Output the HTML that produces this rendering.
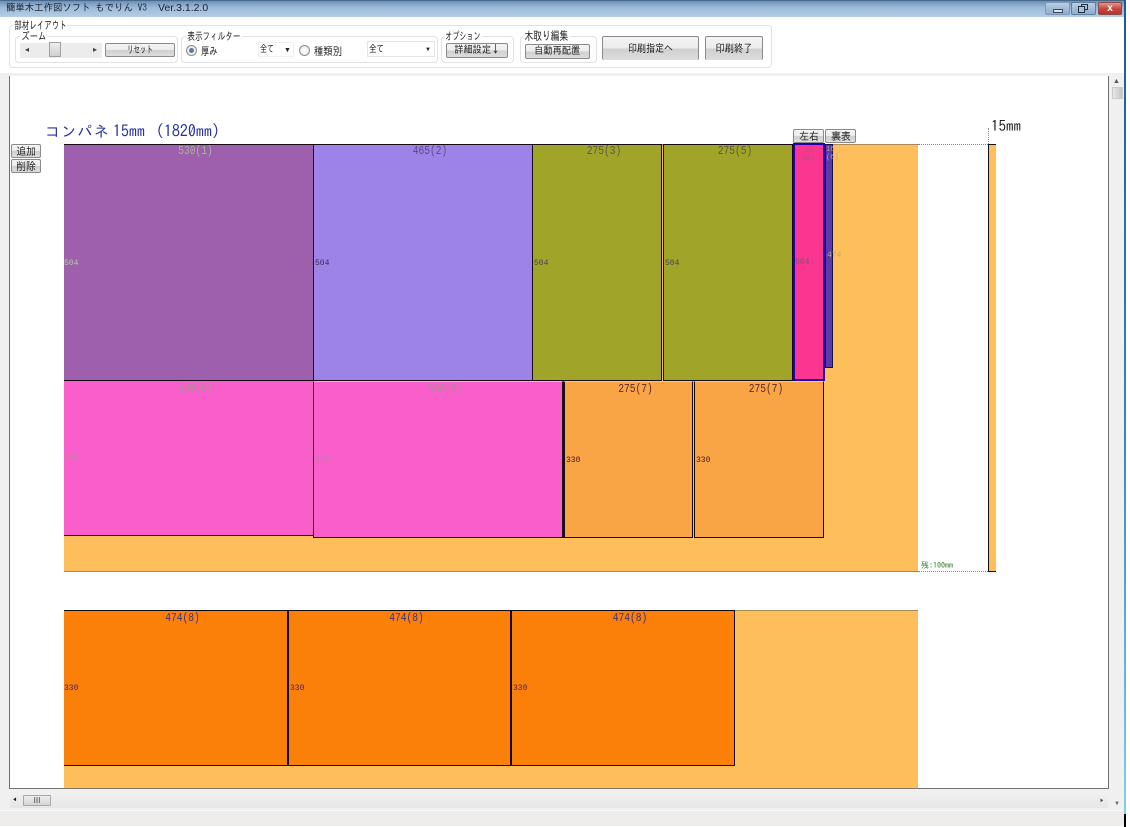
<!DOCTYPE html>
<html lang="ja"><head><meta charset="utf-8"><title>簡単木工作図ソフト もでりん V3</title>
<style>
*{box-sizing:border-box}
html,body{margin:0;padding:0;width:1130px;height:827px;overflow:hidden;background:#fff}
body{position:relative;font-family:"Liberation Sans","IPAGothic","Noto Sans CJK JP",sans-serif;font-size:11px;color:#222}
.a{position:absolute}
.t{position:absolute;white-space:nowrap;line-height:1;transform-origin:left center}
.gb{position:absolute;border:1px solid #dfe3e8;border-radius:4px;background:#fff}
.btn{position:absolute;border:1px solid #8a8a8a;border-radius:2px;background:linear-gradient(#f4f4f4 0,#ececec 48%,#cfcfcf 52%,#dedede 100%);text-align:center;white-space:nowrap;color:#222;font-family:"IPAGothic","Noto Sans CJK JP",sans-serif}
.btn span{display:inline-block;transform-origin:center}
.gt{position:absolute;background:#fff;padding:0 2px;line-height:1;white-space:nowrap;font-family:"IPAGothic","Noto Sans CJK JP",sans-serif;font-size:11px;color:#222;transform-origin:left center}
.p{position:absolute;border:1px solid #140a14;border-top-width:1px}
.c{position:absolute;left:0;right:0;text-align:center;top:0;line-height:12px;font-size:12px;font-family:"Liberation Mono",monospace;letter-spacing:0;transform:translateX(7px) scaleX(.8)}
.s{position:absolute;left:1px;font-size:8px;line-height:8px;font-family:"Liberation Mono",monospace}
.dot{position:absolute;border-color:#888}
.r{position:absolute;width:11px;height:11px;border-radius:50%;border:1px solid #8c8c8c;background:radial-gradient(circle,#fff 0,#e4e4e4 100%)}
</style></head><body>

<!-- title bar -->
<div class="a" style="left:0;top:0;width:1124px;height:17px;background:linear-gradient(#33506f 0,#6f93b8 8%,#9dbbd9 45%,#b5cde5 100%)"></div>
<div class="t" style="left:6px;top:3px;font-size:10px;color:#1c2430;font-family:'IPAGothic','Noto Sans CJK JP',sans-serif;transform:scaleX(.94)">簡単木工作図ソフト もでりん V3</div>
<div class="t" style="left:158px;top:3px;font-size:10.5px;color:#1c2430">Ver.3.1.2.0</div>
<div class="a" style="left:1045px;top:2px;width:25px;height:13px;border:1px solid #7f9ab8;background:linear-gradient(#b7cde3,#8fadcc);border-radius:2px"><div class="a" style="left:7px;top:6px;width:10px;height:4px;border:1px solid #3a4a5c;background:#d8e2ec"></div></div>
<div class="a" style="left:1071px;top:2px;width:25px;height:13px;border:1px solid #5f7f9f;background:linear-gradient(#b7cde3,#8fadcc);border-radius:2px"><div class="a" style="left:9px;top:1px;width:7px;height:6px;border:1px solid #23303e"></div><div class="a" style="left:6px;top:3px;width:7px;height:7px;border:1px solid #23303e;background:#a8c0d8"></div></div>
<div class="a" style="left:1098px;top:2px;width:24px;height:13px;border:1px solid #8a4a48;background:linear-gradient(#e4948a,#c9443a 55%,#b3362e);border-radius:2px"><div class="t" style="left:0;right:0;top:1px;text-align:center;color:#fff;font-size:10px;font-weight:bold">x</div></div>

<!-- window right edge -->
<div class="a" style="left:1124px;top:0;width:2px;height:30px;background:#1d5a9c"></div>
<div class="a" style="left:1124px;top:30px;width:2px;height:784px;background:linear-gradient(#1d5a9c,#2f86c6 50%,#7fd0e8)"></div>
<div class="a" style="left:1124px;top:814px;width:2px;height:13px;background:#000"></div>

<!-- toolbar -->
<div class="gb" style="left:9px;top:25px;width:763px;height:43px"></div>
<div class="gt" style="left:13px;top:20px;transform:scaleX(.68)">部材レイアウト</div>

<div class="gb" style="left:15px;top:36px;width:163px;height:27px"></div>
<div class="gt" style="left:20px;top:31px;transform:scaleX(.75)">ズーム</div>
<div class="a" style="left:20px;top:43px;width:82px;height:15px;background:#ececec"></div>
<div class="t" style="left:25px;top:46px;font-size:8px;color:#444">◂</div>
<div class="t" style="left:93px;top:46px;font-size:8px;color:#444">▸</div>
<div class="a" style="left:49px;top:42px;width:12px;height:15px;border:1px solid #a0a0a0;background:linear-gradient(#eee,#cfcfcf)"></div>
<div class="btn" style="left:105px;top:43px;width:70px;height:14px;font-size:10px;line-height:12px"><span style="transform:scaleX(.65)">リセット</span></div>

<div class="gb" style="left:181px;top:36px;width:257px;height:27px"></div>
<div class="gt" style="left:186px;top:31px;transform:scaleX(.69)">表示フィルター</div>
<div class="r" style="left:186px;top:45px"><div class="a" style="left:2px;top:2px;width:5px;height:5px;border-radius:50%;background:#5c7a9c"></div></div>
<div class="t" style="left:201px;top:46px;font-family:'IPAGothic',sans-serif;font-size:11px;transform:scaleX(.75)">厚み</div>
<div class="a" style="left:258px;top:42px;width:36px;height:15px;border:1px solid #f0f0f0"></div>
<div class="t" style="left:260px;top:44px;font-family:'IPAGothic',sans-serif;font-size:10px;transform:scaleX(.7)">全て</div>
<div class="t" style="left:284px;top:47px;font-size:7px;color:#222">▼</div>
<div class="r" style="left:299px;top:45px"></div>
<div class="t" style="left:314px;top:46px;font-family:'IPAGothic',sans-serif;font-size:11px;transform:scaleX(.85)">種類別</div>
<div class="a" style="left:367px;top:41px;width:68px;height:16px;border:1px solid #e6e6e6"></div>
<div class="t" style="left:369px;top:44px;font-family:'IPAGothic',sans-serif;font-size:10px;transform:scaleX(.75)">全て</div>
<div class="t" style="left:425px;top:47px;font-size:6px;color:#222">▼</div>

<div class="gb" style="left:441px;top:36px;width:73px;height:27px"></div>
<div class="gt" style="left:444px;top:31px;transform:scaleX(.64)">オプション</div>
<div class="btn" style="left:446px;top:43px;width:62px;height:15px;font-size:10.5px;line-height:13px"><span style="transform:scaleX(.87)">詳細設定↓</span></div>

<div class="gb" style="left:520px;top:36px;width:77px;height:27px"></div>
<div class="gt" style="left:523px;top:30px;font-size:12px;transform:scaleX(.73)">木取り編集</div>
<div class="btn" style="left:525px;top:44px;width:65px;height:15px;font-size:10.5px;line-height:13px"><span style="transform:scaleX(.88)">自動再配置</span></div>

<div class="btn" style="left:602px;top:36px;width:97px;height:24px;font-size:11px;line-height:23px;border-bottom:0"><span style="transform:scaleX(.82)">印刷指定へ</span></div>
<div class="btn" style="left:705px;top:36px;width:58px;height:24px;font-size:11px;line-height:23px;border-bottom:0"><span style="transform:scaleX(.84)">印刷終了</span></div>

<!-- separator + surrounding chrome -->
<div class="a" style="left:0;top:73px;width:1124px;height:3px;background:#f0f0f0"></div>
<div class="a" style="left:0;top:76px;width:9px;height:734px;background:#f0f0f0"></div>
<div class="a" style="left:1109px;top:76px;width:15px;height:734px;background:#f0f0f0"></div>
<div class="a" style="left:0;top:789px;width:1124px;height:21px;background:#f0f0f0"></div>

<!-- main client -->
<div class="a" style="left:9px;top:76px;width:1100px;height:713px;background:#fff;border:1px solid #707070;border-top:0"></div>

<!-- vscroll -->
<div class="t" style="left:1113px;top:78px;font-size:7px;color:#555">▲</div>
<div class="a" style="left:1112px;top:87px;width:11px;height:12px;background:linear-gradient(90deg,#e8e8e8,#c4c4c4);border:1px solid #ccc"></div>
<div class="t" style="left:1114px;top:801px;font-size:6px;color:#666">▼</div>

<!-- hscroll -->
<div class="a" style="left:10px;top:793px;width:1098px;height:15px;background:linear-gradient(#f0f0f0,#e6e6e6)"></div>
<div class="t" style="left:13px;top:797px;font-size:7px;color:#222">◀</div>
<div class="a" style="left:23px;top:795px;width:28px;height:11px;border:1px solid #a8a8a8;background:linear-gradient(#eee,#d4d4d4);border-radius:1px;text-align:center;font-size:8px;line-height:9px;color:#444">III</div>
<div class="t" style="left:1100px;top:798px;font-size:7px;color:#555">▶</div>

<!-- status -->
<div class="a" style="left:0;top:810px;width:1124px;height:16px;background:#efedec;border-top:1px solid #f8f8f8"></div>

<!-- heading -->
<div class="t" style="left:45px;top:123px;font-size:15px;color:#2732a0;font-family:'IPAGothic','Noto Sans CJK JP',sans-serif"><span style="letter-spacing:1.2px">コンパネ</span><span style="font-size:16px;margin-left:3px">15mm</span><span style="font-size:16px;margin-left:11px">(1820mm)</span></div>
<div class="t" style="left:991px;top:118px;font-size:15px;color:#222;font-family:'IPAGothic',sans-serif">15mm</div>

<!-- side buttons -->
<div class="btn" style="left:11px;top:144px;width:30px;height:14px;font-size:11px;line-height:13px"><span style="transform:scaleX(.9)">追加</span></div>
<div class="btn" style="left:11px;top:159px;width:30px;height:14px;font-size:11px;line-height:13px"><span style="transform:scaleX(.9)">削除</span></div>
<div class="btn" style="left:793px;top:129px;width:31px;height:14px;font-size:11px;line-height:13px"><span style="transform:scaleX(.9)">左右</span></div>
<div class="btn" style="left:825px;top:129px;width:31px;height:14px;font-size:11px;line-height:13px"><span style="transform:scaleX(.9)">裏表</span></div>

<!-- plate 1 -->
<div class="a" style="left:64px;top:144px;width:854px;height:428px;background:#ffbe5c;border-top:1px solid #a88a58;border-bottom:1px solid #a08a62"></div>

<div class="p" style="left:64px;top:144px;width:250px;height:238px;background:#9e60ac;border-left:0"><div class="c" style="color:#a9b59c">530(1)</div><div class="s" style="left:0;top:115px;color:#a8d0a0">504</div></div>
<div class="p" style="left:313px;top:144px;width:220px;height:237px;background:#9d82e8"><div class="c" style="color:#5c4a7c">465(2)</div><div class="s" style="top:115px;color:#33304c">504</div></div>
<div class="p" style="left:532px;top:144px;width:130px;height:237px;background:#a0a428"><div class="c" style="color:#5a5a44">275(3)</div><div class="s" style="top:115px;color:#445">504</div></div>
<div class="p" style="left:663px;top:144px;width:130px;height:237px;background:#a0a428"><div class="c" style="color:#5a5a44">275(5)</div><div class="s" style="top:115px;color:#445">504</div></div>
<div class="p" style="left:825px;top:144px;width:8px;height:224px;background:#5a3aa8;border-color:#1a1040"><div class="s" style="left:0;top:1px;color:#b8a0a0;font-size:7px;line-height:8px">16<br>(6)</div><div class="s" style="left:1px;top:107px;color:#b8a888;white-space:nowrap">474</div></div>
<div class="p" style="left:793px;top:143px;width:32px;height:238px;background:#fb3690;border:2px solid #2200b0"><div class="s" style="left:0;right:0;top:2px;text-align:center;color:#a05a80;font-size:7px;line-height:8px">16<br>(4)</div><div class="s" style="left:0;top:114px;color:#84506c">504</div></div>

<div class="p" style="left:64px;top:380px;width:250px;height:156px;background:#fa5ecb;border-left:0"><div class="c" style="color:#a89090;top:1px">530(6)</div><div class="s" style="left:0;top:74px;color:#b09098">330</div></div>
<div class="p" style="left:313px;top:381px;width:250px;height:157px;background:#fa5ecb;border-top-color:#e8c0a8"><div class="c" style="color:#a89090;top:1px">530(6)</div><div class="s" style="top:75px;color:#a09090">330</div></div>
<div class="p" style="left:563px;top:381px;width:130px;height:157px;background:#f9a545;border-top-color:#f8c8a0;border-left-width:2px"><div class="c" style="color:#5a2a2a;top:1px">275(7)</div><div class="s" style="top:75px;color:#401818">330</div></div>
<div class="p" style="left:694px;top:381px;width:130px;height:157px;background:#f9a545;border-top-color:#f8c8a0"><div class="c" style="color:#5a2a2a;top:1px">275(7)</div><div class="s" style="top:75px;color:#401818">330</div></div>

<!-- dims -->
<div class="dot" style="left:918px;top:144px;width:70px;border-top:1px dotted #888"></div>
<div class="dot" style="left:918px;top:571px;width:70px;border-top:1px dotted #888"></div>
<div class="dot" style="left:988px;top:128px;height:16px;border-left:1px dotted #888"></div>
<div class="t" style="left:921px;top:561px;font-size:8px;color:#2a7a2a;font-family:'IPAGothic',sans-serif">残:100mm</div>

<!-- side strip -->
<div class="a" style="left:988px;top:144px;width:8px;height:428px;background:#ffbe5c;border-left:1px solid #111;border-top:1px solid #111;border-bottom:1px solid #111"></div>

<!-- plate 2 -->
<div class="a" style="left:64px;top:610px;width:854px;height:179px;background:#ffbe5c;border-top:1px solid #a88a58;border-bottom:1px solid #807a6c"></div>
<div class="p" style="left:64px;top:610px;width:224px;height:156px;background:#fa800a;border-left:0"><div class="c" style="color:#3c3080;top:1px">474(8)</div><div class="s" style="left:0;top:74px;color:#502060">330</div></div>
<div class="p" style="left:288px;top:610px;width:223px;height:156px;background:#fa800a"><div class="c" style="color:#3c3080;top:1px">474(8)</div><div class="s" style="top:74px;color:#502060">330</div></div>
<div class="p" style="left:511px;top:610px;width:224px;height:156px;background:#fa800a"><div class="c" style="color:#3c3080;top:1px">474(8)</div><div class="s" style="top:74px;color:#502060">330</div></div>

</body></html>
